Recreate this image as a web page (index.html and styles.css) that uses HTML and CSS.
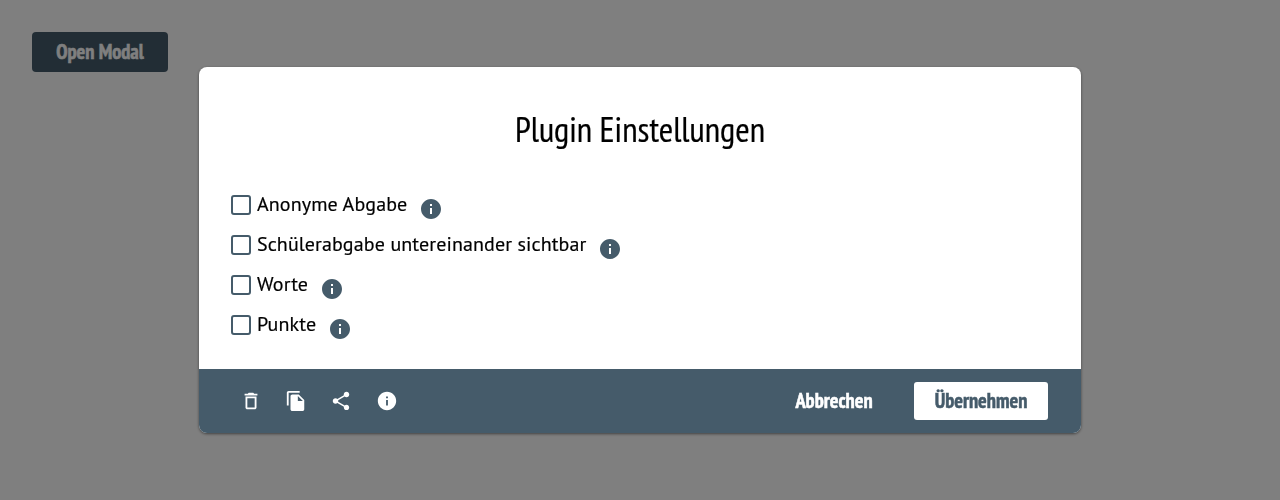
FILE: index.html
```html
<!DOCTYPE html>
<html lang="de">
<head>
<meta charset="utf-8">
<title>Plugin Einstellungen</title>
<link rel="stylesheet" href="styles.css">
</head>
<body>
<svg width="0" height="0" class="sprite">
  <symbol id="info" viewBox="0 0 24 24"><path d="M12 2C6.480 2 2 6.480 2 12s4.480 10 10 10 10-4.480 10-10S17.520 2 12 2zm1 15h-2v-6h2v6zm0-8h-2V7h2v2z"/></symbol>
  <symbol id="delete" viewBox="0 0 24 24"><path d="M6 19c0 1.100.9 2 2 2h8c1.100 0 2-.9 2-2V7H6v12zM8 9h8v10H8V9zm7.500-5l-1-1h-5l-1 1H5v2h14V4h-3.500z"/></symbol>
  <symbol id="copy" viewBox="0 0 24 24"><path d="M16 1H4c-1.100 0-2 .9-2 2v14h2V3h12V1zm-1 4l6 6v10c0 1.100-.9 2-2 2H7.990C6.890 23 6 22.100 6 21l.01-14c0-1.100.89-2 1.990-2h7zm-1 7h5.500L14 6.500V12z"/></symbol>
  <symbol id="share" viewBox="0 0 24 24"><path d="M18 16.080c-.76 0-1.440.3-1.960.77L8.910 12.700c.05-.23.09-.46.09-.7s-.04-.47-.09-.7l7.050-4.110c.54.5 1.250.81 2.040.81 1.660 0 3-1.340 3-3s-1.340-3-3-3-3 1.340-3 3c0 .24.04.47.09.7L8.040 9.810C7.500 9.310 6.790 9 6 9c-1.660 0-3 1.340-3 3s1.340 3 3 3c.79 0 1.500-.31 2.040-.81l7.120 4.160c-.05.21-.08.43-.08.65 0 1.610 1.310 2.920 2.920 2.920s2.920-1.310 2.920-2.920-1.310-2.920-2.920-2.920z"/></symbol>
</svg>
<button class="open">Open Modal</button>
<div class="overlay">
  <div class="modal">
    <div class="content">
      <h1 class="title">Plugin Einstellungen</h1>
      <ul class="options">
        <li class="option"><span class="box"></span><span class="label">Anonyme Abgabe</span><svg class="hint"><use href="#info"/></svg></li>
        <li class="option"><span class="box"></span><span class="label">Schülerabgabe untereinander sichtbar</span><svg class="hint"><use href="#info"/></svg></li>
        <li class="option"><span class="box"></span><span class="label">Worte</span><svg class="hint"><use href="#info"/></svg></li>
        <li class="option"><span class="box"></span><span class="label">Punkte</span><svg class="hint"><use href="#info"/></svg></li>
      </ul>
    </div>
    <div class="footer">
      <div class="tools">
        <svg class="tool"><use href="#delete"/></svg>
        <svg class="tool"><use href="#copy"/></svg>
        <svg class="tool"><use href="#share"/></svg>
        <svg class="tool about"><use href="#info"/></svg>
      </div>
      <div class="actions">
        <button class="action cancel">Abbrechen</button>
        <button class="action apply">Übernehmen</button>
      </div>
    </div>
  </div>
</div>
</body>
</html>
```
FILE: styles.css
```css
* { box-sizing: border-box; }
body { margin: 0; padding: 32px; height: 500px; overflow: hidden; background: #fff; font-family: "PT Sans", "Open Sans", sans-serif; }
.sprite { position: absolute; }
button { border: 0; padding: 0 0 1px; display: flex; align-items: center; justify-content: center; white-space: nowrap; font: bold 20.4px "PT Sans Narrow", "Open Sans", sans-serif; font-stretch: 75%; -webkit-text-stroke: .5px currentColor; }
.open { width: 136px; height: 40px; border-radius: 4px; background: #455b6a; color: #fff; }
.overlay { position: fixed; inset: 0; display: flex; align-items: center; justify-content: center; background: rgba(0,0,0,.5); }
.modal { width: 882px; height: 366px; border-radius: 8px; overflow: hidden; background: #fff; display: flex; flex-direction: column; box-shadow: 0 1px 3px rgba(0,0,0,.5); }
.content { flex: 1; padding: 39px 32px 0; }
.title { margin: 0; height: 46px; line-height: 46px; font-family: "PT Sans Narrow", "Open Sans", sans-serif; font-size: 35px; font-weight: 400; font-stretch: 75%; text-align: center; white-space: nowrap; -webkit-text-stroke: .2px currentColor; }
.options { list-style: none; margin: 33px 0 0; padding: 0; }
.option { height: 40px; display: flex; align-items: flex-start; }
.box { width: 20px; height: 20px; margin: 10px 6px 0 0; border: 2px solid #455b6a; border-radius: 3px; }
.label { height: 40px; line-height: 38px; font-size: 20px; letter-spacing: .11px; white-space: nowrap; -webkit-text-stroke: .2px currentColor; }
.hint { width: 24px; height: 24px; margin: 12px 0 0 11.6px; fill: #455b6a; }
.footer { height: 64px; padding: 0 33px 0 41px; background: #455b6a; display: flex; align-items: center; justify-content: space-between; }
.tools { display: flex; align-items: center; gap: 23px; }
.tool { width: 22px; height: 22px; fill: #fff; }
.about { margin-left: 1px; }
.actions { display: flex; }
.action { height: 38px; border-radius: 3px; }
.cancel { width: 120px; margin-right: 20px; background: none; color: #fff; }
.apply { width: 134px; background: #fff; color: #455b6a; }
```
